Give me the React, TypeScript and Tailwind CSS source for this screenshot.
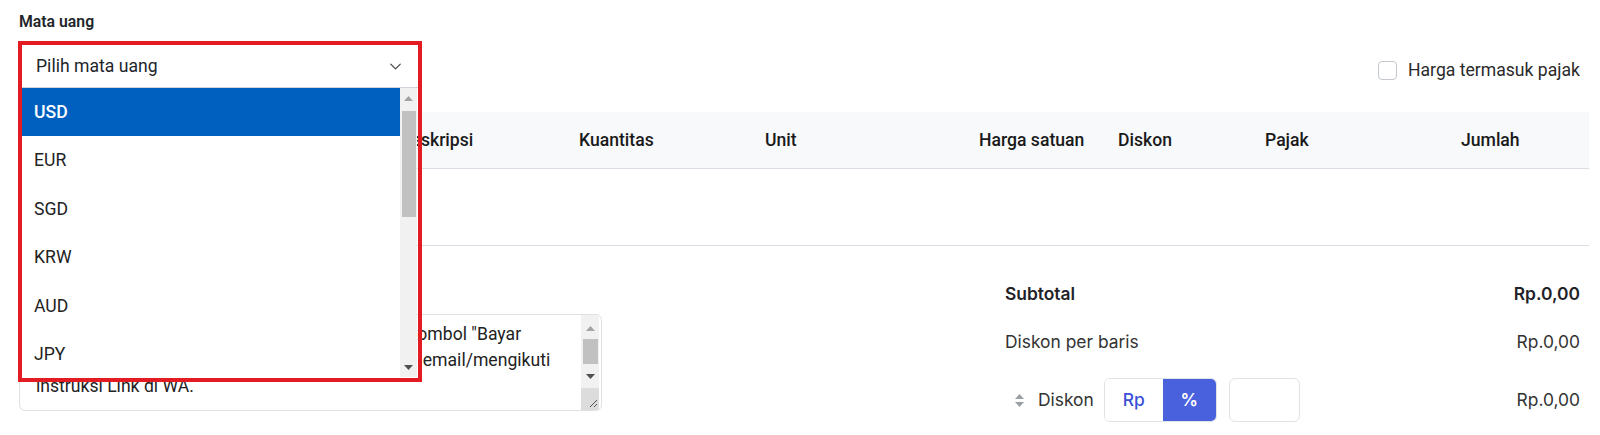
import { ChevronDown } from "lucide-react";

const options = ["USD", "EUR", "SGD", "KRW", "AUD", "JPY"];

const headers = ["", "Deskripsi", "Kuantitas", "Unit", "Harga satuan", "Diskon", "Pajak", "Jumlah"];

const Triangle = ({ up, color }: { up?: boolean; color: string }) => (
    <svg width="9" height="5" viewBox="0 0 9 5">
        <path d={up ? "M0 5 L4.5 0 L9 5 Z" : "M0 0 L4.5 5 L9 0 Z"} fill={color} />
    </svg>
);

const App = () => {
    return (
        <div className="w-[1600px] h-[435px] overflow-hidden bg-white pt-[11px] pl-[19px] pr-[11px] text-[#212529] font-['Roboto',sans-serif]">
            <div className="flex justify-between items-end">
                <div>
                    <div className="text-[15.8px] leading-[22px] font-semibold mb-[11px]">Mata uang</div>
                    <div className="relative z-10 w-[401px] h-[44px] border border-[#ced4da] bg-white flex items-center justify-between pl-[16px] pr-[14px] text-[17.6px]">
                        <span>Pilih mata uang</span>
                        <ChevronDown size={19} strokeWidth={1.6} className="text-[#4a4a4a]" />
                        {/* opened list */}
                        <div className="absolute left-[2px] top-[43px] w-[395px] h-[289px] bg-white flex overflow-hidden">
                            <div className="flex-1 flex flex-col">
                                {options.map((o, i) => (
                                    <div
                                        key={o}
                                        className={
                                            i === 0
                                                ? "h-[48px] shrink-0 flex items-center pl-[12px] bg-[#0060c0] text-white font-medium"
                                                : "h-[48.6px] shrink-0 flex items-center pl-[12px] text-[#222]"
                                        }
                                    >
                                        {o}
                                    </div>
                                ))}
                            </div>
                            <div className="w-[17px] bg-[#f1f1f1] flex flex-col items-center">
                                <div className="h-[20px] flex items-center justify-center">
                                    <Triangle up color="#a3a3a3" />
                                </div>
                                <div className="w-[14px] h-[106px] bg-[#c1c1c1] mt-[3px]" />
                                <div className="flex-1" />
                                <div className="h-[20px] flex items-center justify-center">
                                    <Triangle color="#505050" />
                                </div>
                            </div>
                        </div>
                        {/* highlight frame */}
                        <div className="absolute -left-[2px] -top-[4px] w-[404px] h-[341px] border-4 border-[#e31b23] pointer-events-none" />
                    </div>
                </div>
                <label className="flex items-center gap-[11px] mb-[7px] mr-[9px] text-[17.6px] leading-[22px] text-[#2a2a2a]">
                    <span className="w-[19px] h-[19px] rounded-[4px] border border-[#c3c8cf] bg-white" />
                    Harga termasuk pajak
                </label>
            </div>

            <div className="mt-6">
                <div className="grid grid-cols-[364px_179px_186px_214px_139px_147px_196px_1fr] h-[57px] items-center bg-[#f8f9fb] border-b border-[#d9dee5] text-[17.6px] font-medium text-[#1a1a1a]">
                    {headers.map((h, i) => (
                        <div key={i} className="pl-[17px]">
                            {h}
                        </div>
                    ))}
                </div>
                <div className="h-[77px] border-b border-[#d9dee5]" />
            </div>

            <div className="flex justify-between">
                <div className="w-[583px] pt-[68px]">
                    <div className="h-[97px] border border-[#dde1e6] rounded-[6px] flex overflow-hidden">
                        <div className="flex-1 pl-[16px] pt-[6px] text-[17.6px] leading-[26px] text-[#222] whitespace-pre-line">
                            {'Silahkan lakukan pembayaran dengan menekan tombol "Bayar\nSekarang" yang terdapat pada invoice di dalam\u00a0\u00a0\u00a0\u00a0 email/mengikuti\ninstruksi Link di WA.'}
                        </div>
                        <div className="w-[18px] bg-[#f1f1f1] flex flex-col items-center mr-[2px]">
                            <div className="h-[22px] mt-[2px] flex items-center justify-center">
                                <Triangle up color="#a3a3a3" />
                            </div>
                            <div className="w-[15px] h-[25px] bg-[#c1c1c1]" />
                            <div className="h-[24px] flex items-center justify-center">
                                <Triangle color="#505050" />
                            </div>
                            <div className="flex-1 w-full bg-[#dcdcdc] flex items-end justify-end">
                                <svg width="10" height="10" viewBox="0 0 10 10" className="mb-[2px] mr-[1px]">
                                    <path d="M2 9 L9 2 M6 9 L9 6" stroke="#555" strokeWidth="1" />
                                </svg>
                            </div>
                        </div>
                    </div>
                </div>

                <div className="w-[575px] mr-[9px] pt-[24px] font-['Inter',sans-serif] text-[17.4px] text-[#1f2328]">
                    <div className="h-12 flex items-center justify-between font-semibold">
                        <span>Subtotal</span>
                        <span>Rp.0,00</span>
                    </div>
                    <div className="h-12 flex items-center justify-between text-[#333]">
                        <span>Diskon per baris</span>
                        <span>Rp.0,00</span>
                    </div>
                    <div className="mt-3 h-11 flex items-center justify-between text-[#333]">
                        <div className="flex items-center">
                            <div className="flex flex-col gap-[3px] ml-[10px] mr-[14px]">
                                <Triangle up color="#9aa0a6" />
                                <Triangle color="#9aa0a6" />
                            </div>
                            <span className="mr-[10px]">Diskon</span>
                            <div className="flex h-[44px] border border-[#dfe3e8] rounded-[6px] overflow-hidden">
                                <div className="w-[58px] flex items-center justify-center text-[#3b4fd6] font-medium bg-white">Rp</div>
                                <div className="w-[53px] flex items-center justify-center bg-[#4a61dd] text-white font-semibold">%</div>
                            </div>
                            <div className="ml-[12px] w-[71px] h-[44px] border border-[#dfe3e8] rounded-[6px]" />
                        </div>
                        <span>Rp.0,00</span>
                    </div>
                </div>
            </div>
        </div>
    );
};

export default App;
